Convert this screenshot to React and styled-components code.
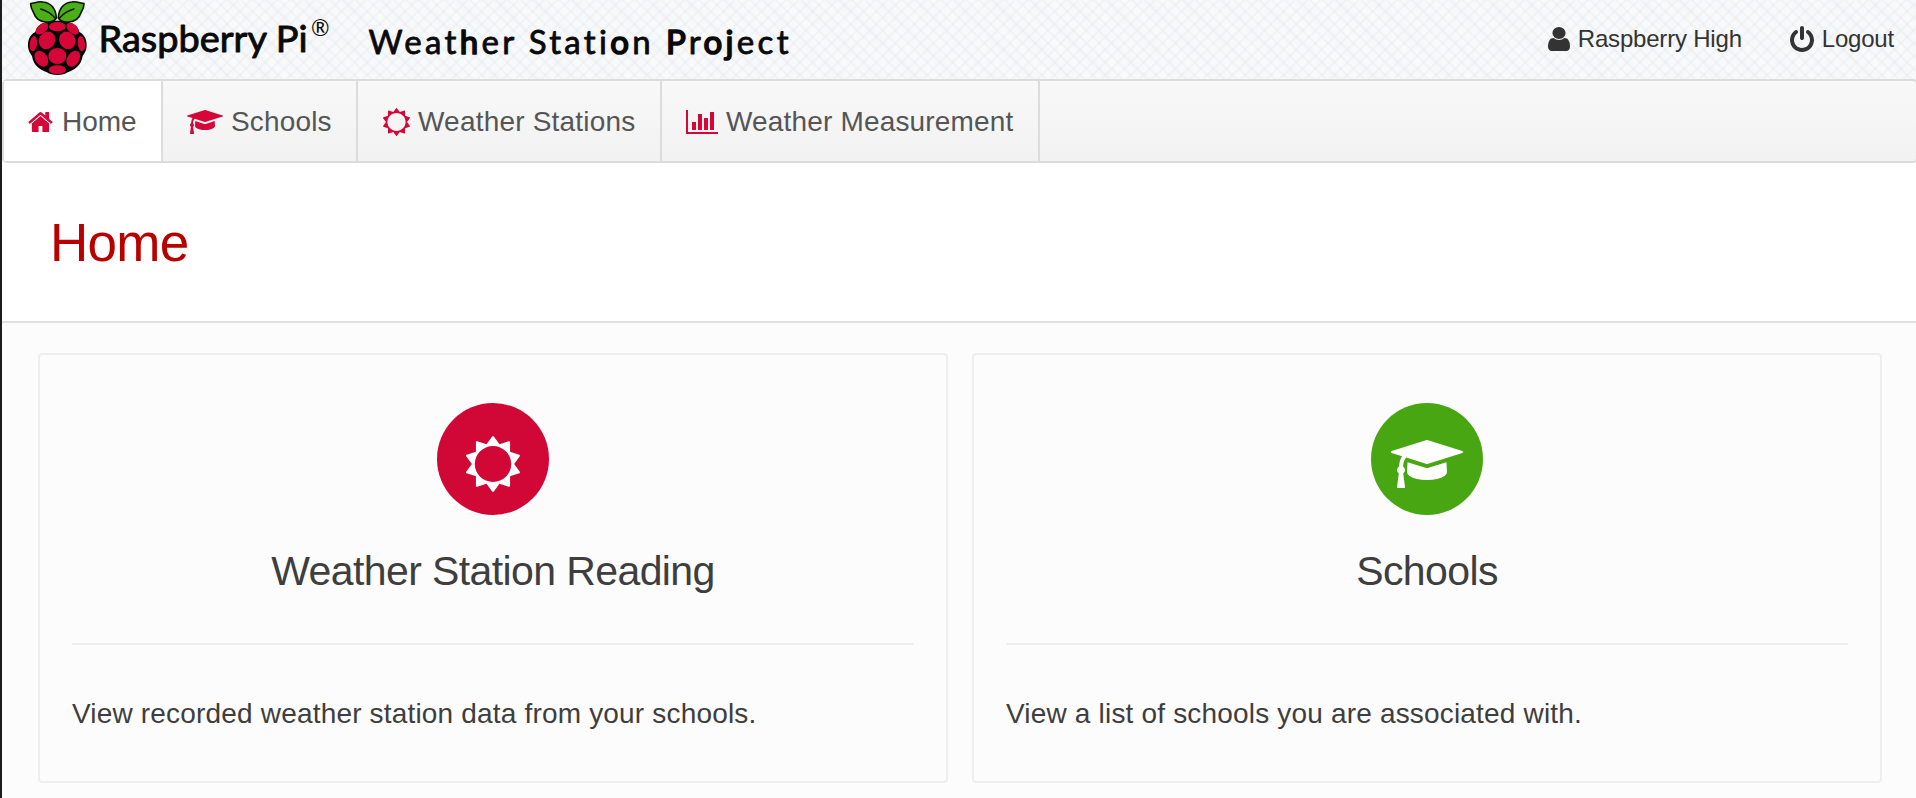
import React from "react";
import styled, { createGlobalStyle } from "styled-components";

const GlobalStyle = createGlobalStyle`
  * { box-sizing: border-box; }
  body {
    margin: 0;
    background: #fcfcfc;
    color: #3e3e3e;
    font-family: "Liberation Sans", Arial, sans-serif;
    overflow: hidden;
  }
`;

const Page = styled.div`
  height: 798px;
  border-left: 2px solid #1c1c1f;
  background: #fcfcfc;
  overflow: hidden;
`;

const Header = styled.header`
  height: 79px;
  display: flex;
  justify-content: space-between;
  background-color: #f9fafb;
  background-image:
    repeating-linear-gradient(45deg, rgba(222, 225, 230, 0.3) 0, transparent 2px 7px, rgba(222, 225, 230, 0.3) 9px),
    repeating-linear-gradient(-45deg, rgba(222, 225, 230, 0.3) 0, transparent 2px 7px, rgba(222, 225, 230, 0.3) 9px),
    repeating-linear-gradient(45deg, rgba(228, 230, 234, 0.15) 0, transparent 10px 17px, rgba(228, 230, 234, 0.15) 27px);
`;

const LogoSvg = styled.svg`
  display: block;
  width: 820px;
  height: 79px;
`;

const LogoText = styled.text`
  font-family: Lato, "Liberation Sans", sans-serif;
  font-size: ${(p) => p.$size}px;
  font-weight: 400;
  font-variant-ligatures: none;
  fill: #0a0a0a;
  stroke: #0a0a0a;
  stroke-width: ${(p) => p.$stroke}px;
  stroke-linejoin: round;
`;

const HeavyLetter = styled.tspan`
  stroke-width: 1.7px;
`;

const Account = styled.div`
  display: flex;
  gap: 48px;
  padding: 0 22px 0 0;
`;

const AccountLink = styled.a`
  display: flex;
  align-items: center;
  height: 77px;
  gap: 8px;
  font-size: 24px;
  letter-spacing: -0.2px;
  color: #333;
`;

const Nav = styled.nav`
  height: 84px;
  margin-right: -2px;
  display: flex;
  border: 2px solid #dcdcdc;
  border-radius: 5px;
  background: linear-gradient(#f8f8f8, #f2f2f2);
`;

const NavItem = styled.a`
  width: ${(p) => p.$width}px;
  padding: 1px 0 0 ${(p) => p.$indent}px;
  display: flex;
  align-items: center;
  gap: ${(p) => (p.$active ? 9 : 8)}px;
  border-right: 2px solid #dcdcdc;
  background: ${(p) => (p.$active ? "#fff" : "transparent")};
  color: #555;
  font-size: 28px;
  letter-spacing: ${(p) => p.$tracking}px;
  white-space: nowrap;
`;

const Icon = styled.svg`
  display: block;
  flex: none;
  width: ${(p) => p.$w}px;
  height: ${(p) => p.$h}px;
  fill: ${(p) => p.$color || "currentColor"};
`;

const TitleBar = styled.section`
  height: 160px;
  padding: 50px 0 0 48px;
  background: #fff;
  border-bottom: 2px solid #e0e0e0;
`;

const Title = styled.h1`
  margin: 0;
  font-size: 53px;
  line-height: 60px;
  letter-spacing: -0.7px;
  font-weight: 400;
  color: #b90000;
`;

const Cards = styled.main`
  display: grid;
  grid-template-columns: 910px 910px;
  gap: 24px;
  padding: 30px 0 0 36px;
`;

const Card = styled.section`
  height: 430px;
  padding: 48px 32px 0;
  border: 2px solid #eee;
  border-radius: 4px;
  display: flex;
  flex-direction: column;
  align-items: center;
`;

const Badge = styled.div`
  width: 112px;
  height: 112px;
  border-radius: 50%;
  background: ${(p) => p.$color};
  display: flex;
  align-items: center;
  justify-content: center;
  padding-top: 10px;
`;

const CardTitle = styled.h2`
  margin: 32px 0 48px;
  font-size: 41px;
  line-height: 48px;
  letter-spacing: -0.6px;
  font-weight: 400;
`;

const CardText = styled.p`
  width: 100%;
  margin: 0;
  padding-top: 49px;
  border-top: 2px solid #eee;
  font-size: 28px;
  line-height: 40px;
  letter-spacing: 0.18px;
`;

const ICONS = {
  home: {
    box: "63 253 1666 1283",
    d: "M1472 992v480q0 26-19 45t-45 19h-384v-384h-256v384h-384q-26 0-45-19t-19-45v-480q0-1 .5-3t.5-3l575-474 575 474q1 2 1 6zm223-69l-62 74q-8 9-21 11h-3q-13 0-21-7l-692-577-692 577q-12 8-24 7-13-2-21-11l-62-74q-8-10-7-23.5t11-21.5l719-599q32-26 76-26t76 26l244 204v-195q0-14 9-23t23-9h192q14 0 23 9t9 23v408l219 182q10 8 11 21.5t-7 23.5z",
  },
  cap: {
    box: "0 128 2304 1536",
    d: "M1774 836l18 316q4 69-82 128t-235 93.500-323 34.500-323-34.500-235-93.500-82-128l18-316 574 181q22 7 48 7t48-7zm530-324q0 23-22 31l-1120 352q-4 1-10 1t-10-1l-652-206q-43 34-71 111.500t-34 178.500q63 36 63 109 0 69-58 107l58 433q2 14-8 25-9 11-24 11h-192q-15 0-24-11-10-11-8-25l58-433q-58-38-58-107 0-73 65-111 11-207 98-330l-333-104q-22-8-22-31t22-31l1120-352q4-1 10-1t10 1l1120 352q22 8 22 31z",
  },
  sun: {
    box: "42 0 1708 1792",
    d: "M1472 896q0-117-45.500-223.500t-123-184-184-123-223.500-45.500-223.500 45.500-184 123-123 184-45.500 223.500 45.500 223.500 123 184 184 123 223.500 45.500 223.500-45.500 184-123 123-184 45.500-223.500zm276 277q-4 15-20 20l-292 96v306q0 16-13 26-15 10-29 4l-292-94-180 248q-10 13-26 13t-26-13l-180-248-292 94q-14 6-29-4-13-10-13-26v-306l-292-96q-16-5-20-20-5-17 4-29l180-248-180-248q-9-13-4-29 4-15 20-20l292-96v-306q0-16 13-26 15-10 29-4l292 94 180-248q9-12 26-12t26 12l180 248 292-94q14-6 29 4 13 10 13 26v306l292 96q16 5 20 20 5 16-4 29l-180 248 180 248q9 12 4 29z",
  },
  chart: {
    box: "0 128 2048 1536",
    d: "M640 896v512h-256v-512h256zm384-512v1024h-256v-1024h256zm1024 1152v128h-2048v-1536h128v1408h1920zm-640-896v768h-256v-768h256zm384-384v1152h-256v-1152h256z",
  },
  user: {
    box: "256 128 1280 1536",
    d: "M1536 1399q0 109-62.500 187t-150.500 78h-854q-88 0-150.500-78t-62.500-187q0-85 8.500-160.500t31.500-152 58.500-131 94-89 134.500-34.500q131 128 313 128t313-128q76 0 134.500 34.500t94 89 58.500 131 31.500 152 8.500 160.500zm-256-887q0 159-112.500 271.500t-271.500 112.500-271.500-112.500-112.500-271.500 112.500-271.500 271.500-112.500 271.500 112.500 112.500 271.500z",
  },
  power: {
    box: "128 0 1536 1664",
    d: "M1664 896q0 156-61 298t-164 245-245 164-298 61-298-61-245-164-164-245-61-298q0-182 80.500-343t226.500-270q43-32 95.500-25t83.500 50q32 42 24.500 94.500t-49.500 84.500q-98 74-151.500 181t-53.500 228q0 104 40.500 198.500t109.500 163.500 163.500 109.500 198.500 40.500 198.500-40.500 163.500-109.500 109.500-163.500 40.500-198.500q0-121-53.500-228t-151.500-181q-42-32-49.500-84.500t24.500-94.500q31-43 84-50t95 25q146 109 226.500 270t80.500 343zm-640-768v640q0 52-38 90t-90 38-90-38-38-90v-640q0-52 38-90t90-38 90 38 38 90z",
  },
};

function Glyph({ name, w, h, color }) {
  return (
    <Icon $w={w} $h={h} $color={color} viewBox={ICONS[name].box} preserveAspectRatio="none">
      <path d={ICONS[name].d} />
    </Icon>
  );
}

const DRUPELETS = [
  [172, 80, 25, 14, 0],
  [126, 86, 22, 13, -40],
  [218, 86, 22, 13, 40],
  [141, 121, 24, 27, 30],
  [202, 121, 24, 27, -30],
  [100, 131, 11, 23, 8],
  [244, 131, 11, 23, -8],
  [172, 168, 27, 24, 0],
  [124, 176, 18, 26, -33],
  [220, 176, 18, 26, 33],
  [172, 209, 26, 13, 0],
];

function Logo() {
  return (
    <LogoSvg viewBox="2 0 820 79">
      <g transform="scale(0.33333)">
        <path
          d="M172 62C195 62 232 66 238 96C254 104 261 120 260 138C259 154 252 162 248 168C244 196 224 210 203 217C189 228 155 228 141 217C120 210 100 196 96 168C92 162 85 154 84 138C83 120 90 104 106 96C112 66 149 62 172 62Z"
          fill="#050505"
        />
        <g fill="#4bae16" stroke="#0a1404" strokeWidth="5" strokeLinejoin="round">
          <path d="M169 54C168 24 151 8 129 6C116 3 105 9 92 11C92 24 97 32 101 38C106 54 120 64 137 66C153 68 164 62 169 54Z" />
          <path d="M175 54C176 24 193 8 215 6C228 3 239 9 252 11C252 24 247 32 243 38C238 54 224 64 207 66C191 68 180 62 175 54Z" />
          <path d="M122 27Q148 34 165 54M222 27Q196 34 179 54" fill="none" strokeWidth="4" strokeLinecap="round" />
        </g>
        {DRUPELETS.map(([x, y, rx, ry, turn]) => (
          <ellipse key={`${x}-${y}`} cx={x} cy={y} rx={rx} ry={ry} transform={`rotate(${turn} ${x} ${y})`} fill="#d50638" />
        ))}
      </g>
      <LogoText x="98.500" y="51.500" $size={36.5} $stroke={0.9} textLength="209" lengthAdjust="spacingAndGlyphs">
        Raspberry Pi
      </LogoText>
      <LogoText x="311" y="36" $size={23} $stroke={0} textLength="18.500" lengthAdjust="spacingAndGlyphs">
        ®
      </LogoText>
      <LogoText x="368.500" y="53.500" $size={33} $stroke={0.8} textLength="420" lengthAdjust="spacing">
        Weat<HeavyLetter>h</HeavyLetter>er Stati<HeavyLetter>o</HeavyLetter>n <HeavyLetter>P</HeavyLetter>r
        <HeavyLetter>oj</HeavyLetter>ect
      </LogoText>
    </LogoSvg>
  );
}

const NAV = [
  { label: "Home", icon: "home", w: 25, h: 20, width: 159, indent: 24, tracking: 0, active: true },
  { label: "Schools", icon: "cap", w: 36, h: 24, width: 195, indent: 24, tracking: 0.15 },
  { label: "Weather Stations", icon: "sun", w: 27, h: 28, width: 304, indent: 25, tracking: 0.2 },
  { label: "Weather Measurement", icon: "chart", w: 32, h: 24, width: 378, indent: 24, tracking: 0.17 },
];

const CARDS = [
  { title: "Weather Station Reading", text: "View recorded weather station data from your schools.", icon: "sun", w: 54, h: 56, color: "#d10735" },
  { title: "Schools", text: "View a list of schools you are associated with.", icon: "cap", w: 72, h: 48, color: "#48a612" },
];

export default function App() {
  return (
    <>
      <GlobalStyle />
      <Page>
        <Header>
          <Logo />
          <Account>
            <AccountLink>
              <Glyph name="user" w={22} h={24} />
              Raspberry High
            </AccountLink>
            <AccountLink>
              <Glyph name="power" w={24} h={26} />
              Logout
            </AccountLink>
          </Account>
        </Header>
        <Nav>
          {NAV.map((n) => (
            <NavItem key={n.label} $width={n.width} $indent={n.indent} $tracking={n.tracking} $active={n.active}>
              <Glyph name={n.icon} w={n.w} h={n.h} color="#d50638" />
              {n.label}
            </NavItem>
          ))}
        </Nav>
        <TitleBar>
          <Title>Home</Title>
        </TitleBar>
        <Cards>
          {CARDS.map((c) => (
            <Card key={c.title}>
              <Badge $color={c.color}>
                <Glyph name={c.icon} w={c.w} h={c.h} color="#fff" />
              </Badge>
              <CardTitle>{c.title}</CardTitle>
              <CardText>{c.text}</CardText>
            </Card>
          ))}
        </Cards>
      </Page>
    </>
  );
}
